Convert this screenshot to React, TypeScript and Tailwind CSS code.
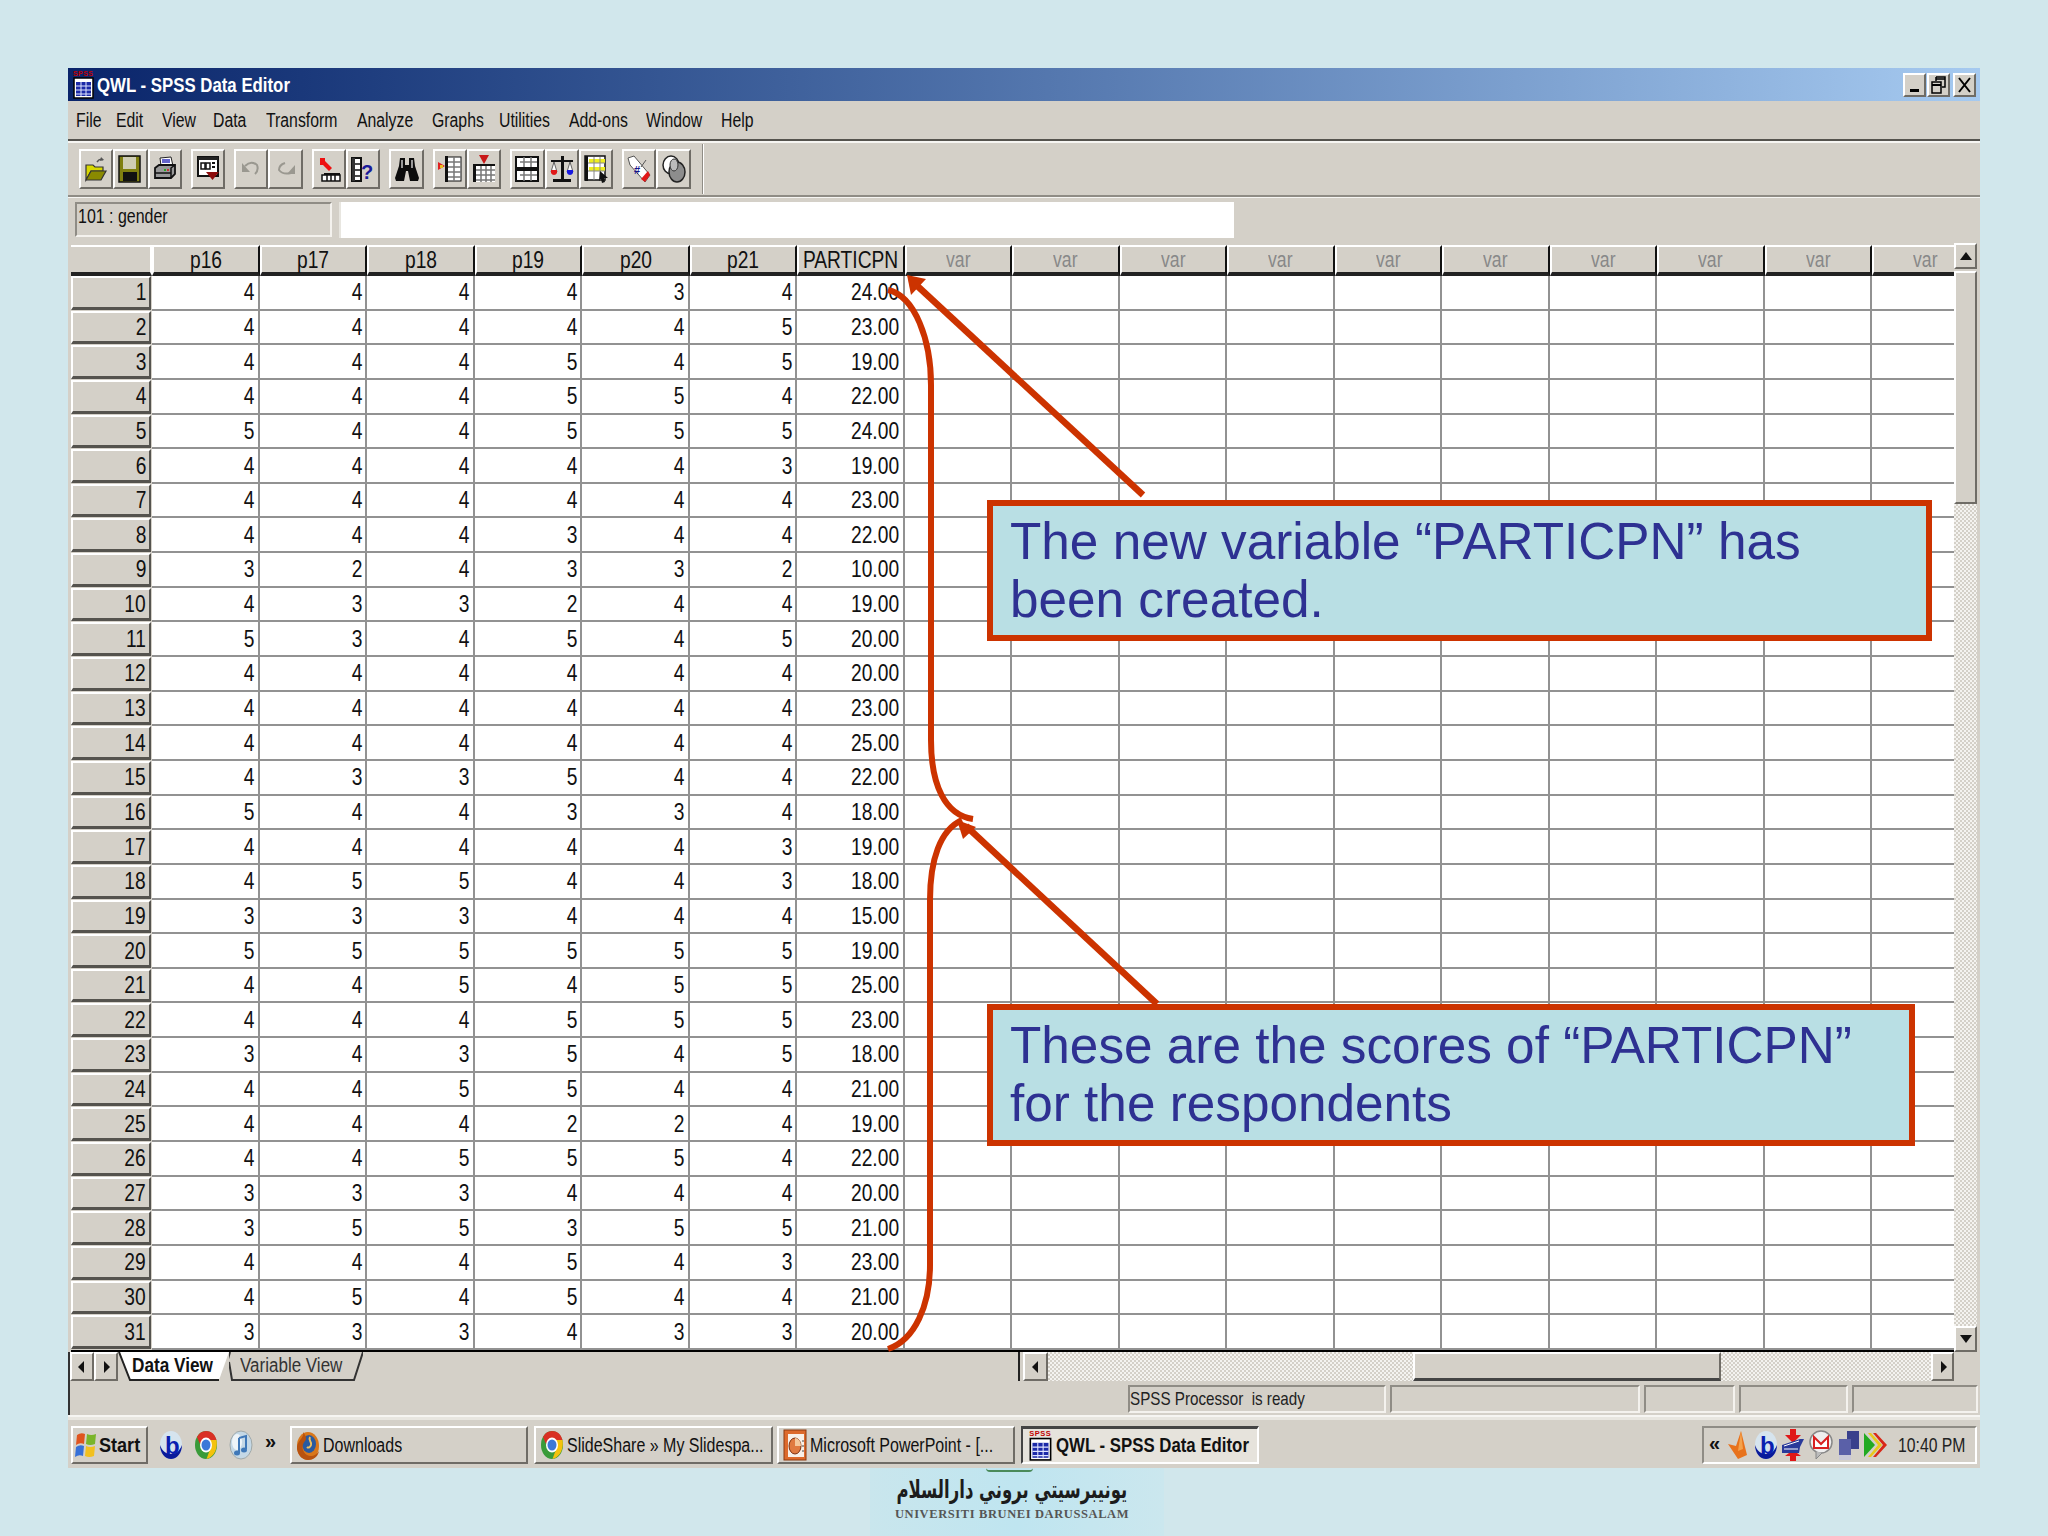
import React from "react";

const rows: (number | string)[][] = [
  [4,4,4,4,3,4,"24.00"],[4,4,4,4,4,5,"23.00"],[4,4,4,5,4,5,"19.00"],[4,4,4,5,5,4,"22.00"],[5,4,4,5,5,5,"24.00"],
  [4,4,4,4,4,3,"19.00"],[4,4,4,4,4,4,"23.00"],[4,4,4,3,4,4,"22.00"],[3,2,4,3,3,2,"10.00"],[4,3,3,2,4,4,"19.00"],
  [5,3,4,5,4,5,"20.00"],[4,4,4,4,4,4,"20.00"],[4,4,4,4,4,4,"23.00"],[4,4,4,4,4,4,"25.00"],[4,3,3,5,4,4,"22.00"],
  [5,4,4,3,3,4,"18.00"],[4,4,4,4,4,3,"19.00"],[4,5,5,4,4,3,"18.00"],[3,3,3,4,4,4,"15.00"],[5,5,5,5,5,5,"19.00"],
  [4,4,5,4,5,5,"25.00"],[4,4,4,5,5,5,"23.00"],[3,4,3,5,4,5,"18.00"],[4,4,5,5,4,4,"21.00"],[4,4,4,2,2,4,"19.00"],
  [4,4,5,5,5,4,"22.00"],[3,3,3,4,4,4,"20.00"],[3,5,5,3,5,5,"21.00"],[4,4,4,5,4,3,"23.00"],[4,5,4,5,4,4,"21.00"],
  [3,3,3,4,3,3,"20.00"],
];
const heads = ["p16","p17","p18","p19","p20","p21","PARTICPN"];
const menu: [string, string][] = [
  ["File","w-[40px]"],["Edit","w-[46px]"],["View","w-[51px]"],["Data","w-[53px]"],["Transform","w-[91px]"],
  ["Analyze","w-[75px]"],["Graphs","w-[67px]"],["Utilities","w-[70px]"],["Add-ons","w-[77px]"],["Window","w-[75px]"],["Help","w-[60px]"],
];

const raised = "border-t-2 border-l-2 border-t-white border-l-white border-b-2 border-r-2 border-b-[#6f6c66] border-r-[#6f6c66]";
const inset = "border-t-2 border-l-2 border-t-[#8f8c85] border-l-[#8f8c85] border-b-2 border-r-2 border-b-[#f4f2ee] border-r-[#f4f2ee]";

function Tr({ children, className = "" }: { children: React.ReactNode; className?: string }) {
  return <span className={"inline-block whitespace-nowrap origin-right scale-x-[.8] " + className}>{children}</span>;
}
function Tl({ children, className = "" }: { children: React.ReactNode; className?: string }) {
  return <span className={"inline-block whitespace-nowrap origin-left " + className}>{children}</span>;
}
function Tc({ children, className = "" }: { children: React.ReactNode; className?: string }) {
  return <span className={"inline-block whitespace-nowrap origin-center scale-x-[.8] " + className}>{children}</span>;
}

const I = ({ children }: { children: React.ReactNode }) => (
  <svg width="24" height="28" viewBox="0 0 24 28">{children}</svg>
);
const icons: React.ReactNode[] = [
  <I><path d="M13 7q3-4 6-2" fill="none" stroke="#555" strokeWidth="1.5"/><path d="M17 2l3 3-4 1z" fill="#555"/><path d="M2 10h7l2 2h8v4H7l-5 9z" fill="#d8d800" stroke="#333" strokeWidth="1.2"/><path d="M2 25l5-9h15l-5 9z" fill="#8a8a00" stroke="#333" strokeWidth="1.2"/></I>,
  <I><rect x="1" y="1" width="21" height="26" fill="#7f7f10" stroke="#111" strokeWidth="1.5"/><rect x="5" y="2" width="13" height="12" fill="#cfcdb4"/><rect x="5" y="17" width="14" height="9" fill="#111"/></I>,
  <I><path d="M7 3l11-1 2 9H8z" fill="#fff" stroke="#222"/><path d="M9 5h8M9 7h8" stroke="#3333bb" strokeWidth="1.5"/><path d="M2 13l4-3h16v9l-4 4H2z" fill="#999" stroke="#111" strokeWidth="1.8"/><path d="M2 18h16M18 23v-10l4-3" stroke="#111" fill="none" strokeWidth="1.5"/><rect x="11" y="14" width="2" height="2" fill="#2a2"/><rect x="14" y="14" width="2" height="2" fill="#c33"/></I>,
  <I><rect x="2" y="2" width="20" height="19" fill="#fff" stroke="#111" strokeWidth="2"/><rect x="2" y="2" width="20" height="3" fill="#222"/><rect x="5" y="8" width="4" height="6" fill="none" stroke="#111" strokeWidth="1.5"/><rect x="10" y="8" width="4" height="6" fill="none" stroke="#111" strokeWidth="1.5"/><path d="M16 8h3M16 12h3" stroke="#111" strokeWidth="2"/><path d="M10 17h13l-6.500 8z" fill="#8c0c0c"/></I>,
  <I><path d="M6 11q6-6 12-1 2 5-2 9" fill="none" stroke="#9a9890" strokeWidth="2"/><path d="M3 8v9h8z" fill="#9a9890"/></I>,
  <I><path d="M17 18q-8 2-12-3 0-5 6-7" fill="none" stroke="#9a9890" strokeWidth="2"/><path d="M21 10v9h-8z" fill="#9a9890"/></I>,
  <I><path d="M3 3h5v3l7 7-3 3-6-6H3z" fill="#ee1111"/><rect x="7" y="18" width="16" height="2" fill="#111"/><rect x="5" y="20" width="18" height="6" fill="#fff" stroke="#111" strokeWidth="1.5"/><path d="M10 20v6M14 20v6M18 20v6" stroke="#111" strokeWidth="1.5"/></I>,
  <I><rect x="1" y="3" width="9" height="23" fill="#fff" stroke="#111" strokeWidth="2"/><path d="M1 9h9M1 15h9M1 21h9" stroke="#111" strokeWidth="1.5"/><rect x="1" y="3" width="3" height="23" fill="#333"/><text x="10" y="24" fontFamily="Liberation Sans" fontSize="20" fontWeight="700" fill="#1a1a9a">?</text></I>,
  <I><path d="M5 3h5v7h4V3h5l1 8 4 12-1 3h-8l-2-10h-2l-2 10H1l-1-3 4-12z" fill="#0c0c0c"/><path d="M6 5h2v8H6zM16 5h2v8h-2z" fill="#999"/></I>,
  <I><path d="M0 7l7 4-7 4z" fill="#e02020"/><path d="M2 10h3v3H2z" fill="#e8c020"/><rect x="8" y="2" width="15" height="24" fill="#fff" stroke="#111" strokeWidth="1"/><rect x="7" y="1" width="3" height="26" fill="#111"/><path d="M10 7h13M10 12h13M10 17h13M10 22h13M16 2v24" stroke="#777" strokeWidth="1.5"/></I>,
  <I><path d="M7 0h10l-5 9z" fill="#c81818"/><rect x="2" y="9" width="21" height="18" fill="#fff"/><rect x="1" y="9" width="3" height="18" fill="#111"/><rect x="1" y="9" width="22" height="2" fill="#111"/><path d="M4 15h19M4 20h19M4 25h19M9 11v16M14 11v16M19 11v16" stroke="#777" strokeWidth="1.5"/></I>,
  <I><rect x="1" y="2" width="22" height="24" fill="#fff" stroke="#111" strokeWidth="2"/><rect x="1" y="12" width="22" height="4" fill="#111"/><path d="M5 7h17M5 20h17M9 2v10M9 16v10M16 2v10M16 16v10" stroke="#777" strokeWidth="1.5"/></I>,
  <I><path d="M11 1h3v23h7v3H3v-3h8z" fill="#111"/><path d="M1 6h22" stroke="#111" strokeWidth="2"/><path d="M4 7l-3 10h6zM20 7l-3 10h6z" fill="#fff" stroke="#444" strokeWidth=".8"/><path d="M1 15h6v3q-1 2-3 2t-3-2z" fill="#e01818"/><path d="M17 15h6v3q-1 2-3 2t-3-2z" fill="#1818e0"/></I>,
  <I><rect x="1" y="1" width="20" height="24" fill="#fff" stroke="#111" strokeWidth="1.5"/><rect x="1" y="1" width="3" height="25" fill="#111"/><rect x="5" y="4" width="16" height="4" fill="#eeee20"/><rect x="5" y="12" width="16" height="4" fill="#eeee20"/><path d="M4 8h17M4 16h17M10 2v23M16 2v23" stroke="#888"/><path d="M16 16l8 7-4 0 1 4-3 1-1-4-2 2z" fill="#111"/></I>,
  <I><path d="M1 3l6-2 16 19-5 7-15-17z" fill="#fff" stroke="#555"/><path d="M14 24l7-8 2 4-5 7z" fill="#e01818"/><text x="7" y="19" fontFamily="Liberation Sans" fontSize="11" fontWeight="700" fill="#14148a">#</text><path d="M14 12l5-7" stroke="#555"/></I>,
  <I><ellipse cx="9" cy="10" rx="8" ry="9" fill="#fff" stroke="#222" strokeWidth="1.5"/><ellipse cx="15" cy="17" rx="8" ry="10" fill="#8d8d8d" stroke="#222" strokeWidth="1.5"/><ellipse cx="12" cy="10" rx="4" ry="6" fill="#bbb" stroke="#333"/></I>,
];

const Spss = ({ big = false }: { big?: boolean }) => (
  <svg width={big ? 22 : 24} height={big ? 29 : 31} viewBox="0 0 22 29" className="shrink-0">
    <text x="0" y="6" fontFamily="Liberation Sans" fontSize="7" fontWeight="700" fill="#c00000" textLength="20">SPSS</text>
    <rect x="1" y="8" width="19" height="20" fill="#fff" stroke="#000" strokeWidth="1.5"/>
    <rect x="3" y="12" width="15" height="14" fill="#1c2aa8"/>
    <path d="M3 16h15M3 20h15M3 24h15M8 12v14M13 12v14" stroke="#dfe4ff"/>
  </svg>
);
const Chrome = () => (
  <svg width="24" height="30" viewBox="0 0 24 30" className="shrink-0">
    <ellipse cx="12" cy="15" rx="11" ry="14" fill="#3a9b3a"/>
    <path d="M12 1c5 0 9 3 10.500 9H12c-3 0-5 2-6 4L3 7c2-4 5-6 9-6z" fill="#d93025"/>
    <path d="M22.500 10c1.500 8-2 17-10 19l4-11c1-2 0-5-2-8z" fill="#f4c20d"/>
    <ellipse cx="12" cy="15" rx="6" ry="7.500" fill="#fff"/><ellipse cx="12" cy="15" rx="4.500" ry="5.500" fill="#3b78d8"/>
  </svg>
);
const Bee = () => (
  <svg width="24" height="30" viewBox="0 0 24 30" className="shrink-0">
    <ellipse cx="12" cy="15" rx="11" ry="14" fill="#d6e4ee"/>
    <path d="M1 15c0 8 5 14 11 14s11-6 11-14c-3 7-6 9-11 9s-9-3-11-9z" fill="#0a1a9a"/>
    <text x="6" y="24" fontFamily="Liberation Sans" fontSize="24" fontWeight="700" fill="#0a1fb0">b</text>
  </svg>
);
const Tune = () => (
  <svg width="24" height="30" viewBox="0 0 24 30" className="shrink-0">
    <ellipse cx="12" cy="15" rx="11" ry="14" fill="#c4d8e6" stroke="#a0a8a8"/>
    <ellipse cx="8" cy="12" rx="5" ry="8" fill="#eef4f8"/>
    <path d="M10 8l7-2v13M10 8v15" fill="none" stroke="#3f78b8" strokeWidth="2"/>
    <ellipse cx="8" cy="23" rx="3" ry="2.500" fill="#3f78b8"/><ellipse cx="15" cy="20" rx="3" ry="2.500" fill="#3f78b8"/>
  </svg>
);
const Fox = () => (
  <svg width="24" height="32" viewBox="0 0 24 32" className="shrink-0">
    <ellipse cx="12" cy="17" rx="11" ry="14" fill="#d9771a"/>
    <ellipse cx="13" cy="15" rx="7" ry="9" fill="#2a5aa0"/>
    <path d="M7 3c2 6-7 9-6 17 1 7 6 11 11 11s10-3 11-9c-3 5-8 6-12 4C6 23 5 16 9 12c2-2 1-5-2-9z" fill="#b8520f"/>
    <path d="M14 8c-2 4 2 4 1 8-1 3-3 3-4 2" fill="none" stroke="#eec060" strokeWidth="2"/>
  </svg>
);
const Ppt = () => (
  <svg width="24" height="32" viewBox="0 0 24 32" className="shrink-0">
    <rect x="1" y="1" width="22" height="30" fill="#dd6a2c" stroke="#8c3a10"/>
    <rect x="5" y="5" width="16" height="23" fill="#f8f0e8"/>
    <ellipse cx="12" cy="17" rx="6" ry="8" fill="#e07a40" stroke="#7a3010"/>
    <path d="M12 17V9a6 8 0 0 1 6 8z" fill="#f4c89c"/>
    <path d="M19 12h2M19 17h2M19 22h2" stroke="#444"/>
  </svg>
);
const Flag = () => (
  <svg width="24" height="32" viewBox="0 0 24 32" className="shrink-0">
    <path d="M3 6q4-3 8-1l-1 10q-4-2-8 1z" fill="#e0541e"/>
    <path d="M13 5q4 2 9 0l-1 10q-5 2-9 0z" fill="#7ab52a"/>
    <path d="M2 18q4-3 8-1l-1 10q-4-2-8 1z" fill="#3670d8"/>
    <path d="M12 17q4 2 9 0l-1 10q-5 2-9 0z" fill="#f2c01e"/>
  </svg>
);

const Tray = () => (
  <div className="flex items-center gap-[3px] shrink-0">
    <svg width="24" height="30" viewBox="0 0 24 30"><path d="M14 1l6 24-9 4-10-15 8 2z" fill="#e8721c"/><path d="M14 1l2 18-5 2z" fill="#f4a24c"/></svg>
    <Bee />
    <svg width="25" height="34" viewBox="0 0 25 34"><path d="M9 1h6v6h5l-8 8-8-8h5zM9 33h6v-5h5l-8-6-8 6h5z" fill="#e01818"/><path d="M1 17l18-6h4l-4 8-1 6H1z" fill="#2a3a9a"/><path d="M3 18l15-5M3 21h14" stroke="#fff"/></svg>
    <svg width="24" height="32" viewBox="0 0 24 32"><circle cx="12" cy="13" r="11" fill="#eee" stroke="#888" strokeWidth="1.5"/><path d="M5 8l7 7 7-7v11H5z" fill="#fff" stroke="#d82020" strokeWidth="2"/><path d="M7 22l0 8 6-6" fill="#bbb" stroke="#888"/></svg>
    <svg width="24" height="32" viewBox="0 0 24 32"><rect x="11" y="2" width="12" height="18" fill="#39408c"/><rect x="3" y="10" width="12" height="18" fill="#5a60a8"/><rect x="3" y="26" width="12" height="5" fill="#c8c8d8"/></svg>
    <svg width="26" height="28" viewBox="0 0 26 28"><path d="M1 2l11 12L1 26z" fill="#22aa22"/><path d="M5 2h3l11 12-11 12H5l10-12z" fill="#e8c81c"/><path d="M10 2h3l11 12-11 12h-3l10-12z" fill="#d82818"/></svg>
  </div>
);

const fontBase = "font-['Liberation_Sans',sans-serif]";

function TaskBtn({ w, icon, label }: { w: string; icon: React.ReactNode; label: string }) {
  return (
    <div className={w + " h-[38px] bg-[#d4d0c8] flex items-center gap-[3px] pl-[4px] overflow-hidden " + raised}>
      {icon}
      <Tl className="text-[20px] text-[#111] scale-x-[.8]">{label}</Tl>
    </div>
  );
}
const Tri = ({ d }: { d: "l" | "r" | "u" | "dn" }) => (
  <svg width="12" height="14" viewBox="0 0 12 14">
    {d === "l" && <path d="M8 1v12L2 7z" fill="#111" />}
    {d === "r" && <path d="M4 1v12l6-6z" fill="#111" />}
    {d === "u" && <path d="M6 3l6 8H0z" fill="#111" />}
    {d === "dn" && <path d="M6 11l6-8H0z" fill="#111" />}
  </svg>
);

export default function App() {
  return (
    <div className={"relative w-[2048px] h-[1536px] overflow-hidden bg-[#d1e7ec] pt-[68px] pl-[68px] " + fontBase}>
      <div className="w-[1912px] flex flex-col bg-[#d4d0c8]">
        {/* title */}
        <div className="h-[33px] bg-linear-to-r from-[#0a246a] to-[#a6caf0] flex items-center pl-[5px] pr-[4px]">
          <Spss big />
          <div className="ml-[2px] flex-1 min-w-0">
            <Tl className="text-[20px] font-bold text-white scale-x-[.84]">QWL - SPSS Data Editor</Tl>
          </div>
          <div className={"w-[23px] h-[24px] bg-[#d4d0c8] flex items-end justify-center pb-[3px] " + raised}><div className="w-[9px] h-[3px] bg-black" /></div>
          <div className={"ml-[1px] w-[23px] h-[24px] bg-[#d4d0c8] flex items-center justify-center " + raised}>
            <svg width="15" height="18" viewBox="0 0 15 18"><path d="M5 1h9v10h-3M5 1v4M5 3h9" fill="none" stroke="#000" strokeWidth="1.500"/><rect x="1" y="6" width="9" height="11" fill="none" stroke="#000" strokeWidth="1.500"/><path d="M1 9h9" stroke="#000" strokeWidth="2"/></svg>
          </div>
          <div className={"ml-[3px] w-[23px] h-[24px] bg-[#d4d0c8] flex items-center justify-center " + raised}>
            <svg width="13" height="16" viewBox="0 0 13 16"><path d="M1 1l11 14M12 1L1 15" stroke="#000" strokeWidth="2" /></svg>
          </div>
        </div>
        {/* menu */}
        <div className="h-[38px] flex items-center pl-[8px] text-[20px] text-[#111] border-b-[2px] border-b-[#55534e] box-content">
          {menu.map(([m, w]) => (
            <div key={m} className={w}><Tl className="scale-x-[.79]">{m}</Tl></div>
          ))}
        </div>
        <div className="h-[2px] bg-[#f6f5f2]" />
        {/* toolbar */}
        <div className="h-[52px] flex items-center pl-[11px] gap-[9px] border-b-2 border-b-[#8f8c85] box-content">
          {[[0,1,2],[3],[4,5],[6,7],[8],[9,10],[11,12,13],[14,15]].map((g, gi) => (
            <div key={gi} className="flex">
              {g.map((i) => (
                <div key={i} className={"w-[34.3px] h-[40px] flex items-center justify-center " + raised}>{icons[i]}</div>
              ))}
            </div>
          ))}
          <div className="ml-[2px] w-[2px] h-[50px] border-l border-l-[#8f8c85] border-r border-r-white" />
        </div>
        <div className="h-[1px] bg-[#f6f5f2]" />
        {/* formula */}
        <div className="h-[45px] flex items-start pt-[4px] pl-[7px]">
          <div className={"w-[257px] h-[35px] overflow-hidden leading-[24px] pl-[1px] " + inset}>
            <Tl className="text-[21px] text-[#111] scale-x-[.76]">101 : gender</Tl>
          </div>
          <div className="ml-[7px] w-[895px] h-[36px] bg-white border-l-2 border-l-[#e8e6e0]" />
        </div>
        {/* main grid + v scroll */}
        <div className="flex pl-[3px] pr-[3px]">
          <div className="w-[1883px] h-[1109px] overflow-hidden border-b-2 border-b-black">
            <div className="h-[2px] bg-[#d4d0c8]" />
            <div className="grid w-[1883px] grid-cols-[81px_repeat(17,107.5px)] auto-rows-[34.65px] grid-rows-[31px] text-[24px]">
              <div className={"bg-[#d4d0c8] border-t-2 border-t-white border-b-[4px] border-b-[#222] border-r-2 border-r-white"} />
              {[...heads, ...Array(10).fill("var")].map((h, i) => (
                <div key={i} className="bg-[#d4d0c8] border-t-2 border-t-white border-l-2 border-l-white border-r-2 border-r-[#111] border-b-[4px] border-b-[#222] flex items-center justify-center leading-none text-[#111]">
                  <Tc className={h === "var" ? "text-[#888] text-[22px]" : "text-[#111] text-[24px]"}>{h}</Tc>
                </div>
              ))}
              {rows.map((r, ri) => (
                <React.Fragment key={ri}>
                  <div className="bg-[#d4d0c8] mr-[1px] mb-[1px] border-t-2 border-t-white border-l-2 border-l-white border-b-[3px] border-b-[#55534e] border-r-2 border-r-[#55534e] flex items-center justify-end pr-[3px] text-[#111]">
                    <Tr>{ri + 1}</Tr>
                  </div>
                  {Array.from({ length: 17 }).map((_, ci) => (
                    <div key={ci} className="bg-white border-r-2 border-r-[#929292] border-b-2 border-b-[#929292] flex items-center justify-end pr-[3px] text-[#111]">
                      {r[ci] !== undefined && <Tr>{r[ci]}</Tr>}
                    </div>
                  ))}
                </React.Fragment>
              ))}
            </div>
          </div>
          {/* vertical scrollbar */}
          <div className="w-[23px] h-[1109px] flex flex-col">
            <div className={"h-[26px] bg-[#d4d0c8] flex items-center justify-center " + raised}><Tri d="u" /></div>
            <div className={"h-[233px] mt-[2px] bg-[#d4d0c8] " + raised} />
            <div className="flex-1 bg-[repeating-conic-gradient(#d4d0c8_0%_25%,#f4f3f0_0%_50%)] bg-[length:4px_4px]" />
            <div className={"h-[26px] bg-[#d4d0c8] flex items-center justify-center " + raised}><Tri d="dn" /></div>
          </div>
        </div>
        {/* tabs + hscroll */}
        <div className="h-[29px] flex border-l-2 border-l-[#333]">
          <div className={"w-[24px] h-[29px] flex items-center justify-center " + raised}><Tri d="l" /></div>
          <div className={"w-[24px] h-[29px] flex items-center justify-center " + raised}><Tri d="r" /></div>
          <div className="relative w-[111px] h-[29px] pl-[14px] leading-[27px]">
            <svg className="absolute inset-0" width="111" height="29" viewBox="0 0 111 29"><path d="M1 0h110l-10 28H12z" fill="#fff"/><path d="M1 0l11 28h89" fill="none" stroke="#222" strokeWidth="2"/></svg>
            <Tl className="relative text-[20px] font-bold text-[#111] scale-x-[.86]">Data View</Tl>
          </div>
          <div className="relative w-[134px] h-[29px] pl-[11px] leading-[27px]">
            <svg className="absolute inset-0" width="134" height="29" viewBox="0 0 134 29"><path d="M1 0l-8 28M0 10l3 18h122l9-28" fill="none" stroke="#333" strokeWidth="2"/></svg>
            <Tl className="relative text-[20px] text-[#333] scale-x-[.85]">Variable View</Tl>
          </div>
          <div className="w-[657px] border-r-2 border-r-[#222]" />
          <div className="ml-[3px] flex items-stretch w-[931px]">
            <div className={"w-[25px] bg-[#d4d0c8] flex items-center justify-center " + raised}><Tri d="l" /></div>
            <div className="w-[365px] bg-[repeating-conic-gradient(#d4d0c8_0%_25%,#f4f3f0_0%_50%)] bg-[length:4px_4px]" />
            <div className={"w-[308px] bg-[#d4d0c8] border-b-[#444] border-b-[3px] " + raised} />
            <div className="w-[210px] bg-[repeating-conic-gradient(#d4d0c8_0%_25%,#f4f3f0_0%_50%)] bg-[length:4px_4px]" />
            <div className={"w-[23px] bg-[#d4d0c8] flex items-center justify-center " + raised}><Tri d="r" /></div>
          </div>
        </div>
        {/* status */}
        <div className="h-[34px] flex items-start pt-[4px] pl-[1058px] border-l-2 border-l-[#333] gap-[4px]">
          <div className={"w-[258px] h-[28px] leading-[23px] overflow-hidden " + inset}><Tl className="text-[19px] text-[#222] scale-x-[.8]">SPSS Processor&nbsp; is ready</Tl></div>
          <div className={"w-[250px] h-[28px] " + inset} />
          <div className={"w-[91px] h-[28px] " + inset} />
          <div className={"w-[109px] h-[28px] " + inset} />
          <div className={"w-[126px] h-[28px] " + inset} />
        </div>
        <div className="h-[2px] bg-[#f6f5f2]" />
        <div className="h-[3px] bg-[#e8e6e0]" />
        {/* taskbar */}
        <div className="h-[48px] flex items-center pl-[3px] pt-[1px]">
          <div className={"w-[77px] h-[38px] flex items-center pl-[1px] gap-[1px] overflow-hidden " + raised}>
            <Flag /><Tl className="text-[21px] font-bold text-[#111] scale-x-[.86]">Start</Tl>
          </div>
          <div className="w-[142px] flex items-center pl-[11px] gap-[11px]">
            <Bee /><Chrome /><Tune />
            <span className="ml-[1px] -mt-[8px] text-[20px] font-bold text-[#111]">»</span>
          </div>
          <TaskBtn w="w-[238px]" icon={<Fox />} label="Downloads" />
          <div className="w-[6px]" />
          <TaskBtn w="w-[239px]" icon={<Chrome />} label="SlideShare » My Slidespa..." />
          <div className="w-[4px]" />
          <TaskBtn w="w-[238px]" icon={<Ppt />} label="Microsoft PowerPoint - [..." />
          <div className="w-[6px]" />
          <div className="w-[238px] h-[38px] flex items-center pl-[6px] gap-[3px] border-t-[3px] border-l-2 border-t-[#444] border-l-[#444] border-b-2 border-r-2 border-b-white border-r-white bg-[#e6e3dc] overflow-hidden">
            <Spss /><Tl className="text-[20px] font-bold text-[#111] scale-x-[.84]">QWL - SPSS Data Editor</Tl>
          </div>
          <div className="w-[443px]" />
          <div className={"w-[275px] h-[38px] flex items-center pl-[5px] overflow-hidden border-t-2 border-l-2 border-t-[#8f8c85] border-l-[#8f8c85] border-b-2 border-r-2 border-b-white border-r-white"}>
            <span className="w-[18px] shrink-0 text-[20px] font-bold text-[#111] -mt-[3px]">«</span>
            <Tray />
            <Tl className="ml-[9px] shrink-0 text-[21px] text-[#222] scale-x-[.75]">10:40 PM</Tl>
          </div>
        </div>
      </div>

      {/* logo */}
      <div className="relative ml-[802px] w-[294px] h-[68px] bg-linear-to-r from-[#c9e6ed] via-[#bfe5f0] to-[#cbe7ee] flex flex-col items-center pt-[9px] pr-[10px]">
        <div className="absolute top-0 left-[116px] w-[47px] h-[4px] rounded-b-full border-b-2 border-b-[#4a8a5a]" />
        <div dir="rtl" className="text-[25px] leading-[26px] font-bold text-[#1c1c1c] font-['DejaVu_Sans',sans-serif] scale-x-[.66] whitespace-nowrap">يونيبرسيتي بروني دارالسلام</div>
        <div className="mt-[4px] text-[12.500px] leading-[14px] font-bold text-[#555] tracking-[.6px] font-['Liberation_Serif',serif] whitespace-nowrap">UNIVERSITI BRUNEI DARUSSALAM</div>
      </div>

      {/* annotation arrows */}
      <svg className="absolute inset-0 pointer-events-none" width="2048" height="1536" viewBox="0 0 2048 1536" fill="none">
        <path d="M1143 495L912 281" stroke="#cc3300" strokeWidth="6.500"/>
        <path d="M907 275L926 279 911 295z" fill="#cc3300"/>
        <path d="M888 290C915 296 931 340 931 385V740C931 785 945 815 973 819" stroke="#cc3300" strokeWidth="6"/>
        <path d="M1157 1004L966 826" stroke="#cc3300" strokeWidth="6.500"/>
        <path d="M957 820L976 827 963 839z" fill="#cc3300"/>
        <path d="M962 820C940 830 930 860 930 900V1265C930 1305 915 1340 888 1349" stroke="#cc3300" strokeWidth="6"/>
      </svg>

      {/* callouts */}
      <div className="absolute left-[987px] top-[500px] w-[945px] h-[141px] bg-[#b9dfe4] border-[6px] border-[#cc3300] pl-[17px] pt-[7px] text-[51.300px] leading-[57.500px] text-[#2e3192]">
        The new variable “PARTICPN” has<br />been created.
      </div>
      <div className="absolute left-[987px] top-[1004px] w-[928px] h-[142px] bg-[#b9dfe4] border-[6px] border-[#cc3300] pl-[17px] pt-[7px] text-[51.300px] leading-[57.500px] text-[#2e3192]">
        These are the scores of “PARTICPN”<br />for the respondents
      </div>
    </div>
  );
}
